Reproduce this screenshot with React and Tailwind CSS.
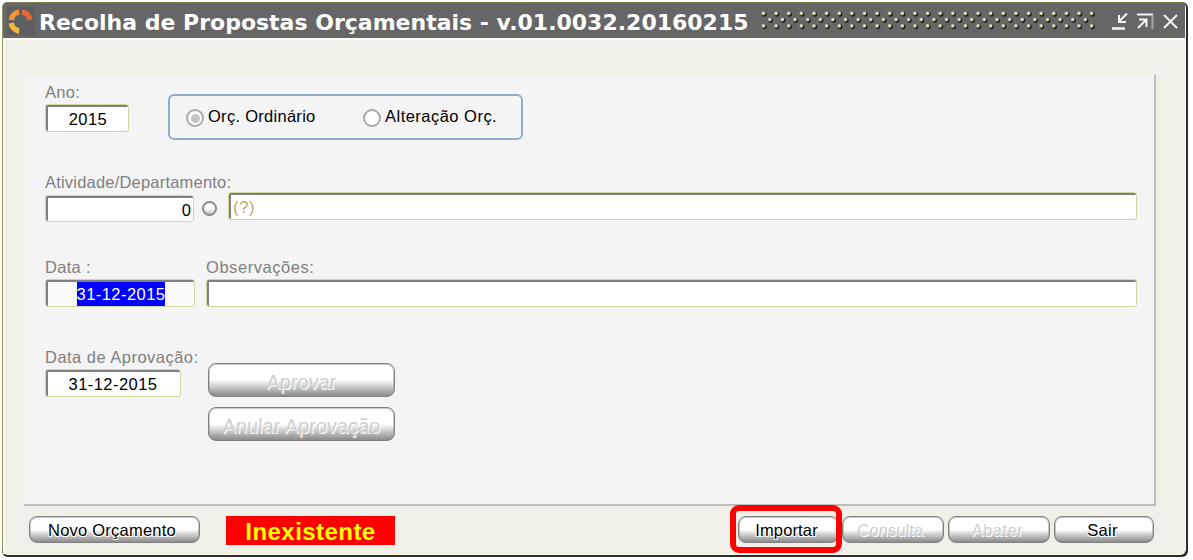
import React from 'react';

function Label({ children, className = '' }) {
  return (
    <div className={`h-[18px] whitespace-nowrap text-[16.5px] leading-[16px] text-[#7f7f7f] ${className}`}>
      {children}
    </div>
  );
}

function Field({ children, className = '' }) {
  return (
    <div className={`shrink-0 rounded-[3px] border border-[#cfd6a0] ${className}`}>
      <div className="flex h-full w-full items-center overflow-hidden rounded-[2px] border-l-2 border-t-2 border-[#808080] whitespace-nowrap">
        {children}
      </div>
    </div>
  );
}

function PushButton({ children, disabled, className = '' }) {
  return (
    <button
      disabled={disabled}
      className={`flex shrink-0 items-center justify-center rounded-[8px] border border-[#808080] bg-linear-to-b from-white from-50% to-[#8a8a8a] shadow-[inset_0_0_0_1px_rgba(150,150,150,0.5)] whitespace-nowrap ${disabled ? 'text-[#cfcfcf] [text-shadow:1px_1px_0_#fff]' : 'text-black [text-shadow:1px_1px_0_#fff,-1px_1px_0_#fff]'} ${className}`}
    >
      {children}
    </button>
  );
}

function Radio({ checked, className = '' }) {
  return (
    <span className={`flex size-[18px] shrink-0 items-center justify-center rounded-full border-2 border-[#a9a9a9] bg-white ${className}`}>
      {checked && <span className="size-[9px] rounded-full bg-[#c6c6c6]" />}
    </span>
  );
}

function Grip() {
  const dots = [];
  for (let i = 0; i < 27; i++) {
    const x = 1.5 + i * 12.62;
    dots.push([x, 2.5], [x, 15]);
    if (i < 26) dots.push([x + 6.3, 8.7]);
  }
  return (
    <svg width="338" height="22" className="block shrink-0">
      {dots.map(([x, y], i) => (
        <g key={i}>
          <circle cx={x + 1.9} cy={y + 1.9} r="2.3" fill="#1a1a1a" />
          <circle cx={x + 1} cy={y + 0.9} r="1.8" fill="#d3d8b0" />
        </g>
      ))}
    </svg>
  );
}

function TitleBar() {
  return (
    <div className="flex h-[35px] shrink-0 items-center rounded-t-[3px] bg-[#666] pl-1">
      <svg width="28" height="28" viewBox="0 0 28 28" className="block shrink-0">
        <rect width="28" height="28" fill="#5e5e60" />
        <g fill="none" strokeWidth="5.4">
          <path d="M4.200 13A9.400 9.400 0 0 1 12.200 5" stroke="#f3943b" />
          <path d="M15 5A9.400 9.400 0 0 1 23 13" stroke="#e76a35" />
          <path d="M4.200 16A9.400 9.400 0 0 0 12.200 24" stroke="#f3b63b" />
        </g>
      </svg>
      <h1 className="mt-[4px] ml-[4px] w-[722px] shrink-0 whitespace-nowrap font-['DejaVu_Sans'] text-[22px] leading-[30px] font-bold text-white">
        Recolha de Propostas Orçamentais - v.01.0032.20160215
      </h1>
      <Grip />
      <svg width="76" height="22" className="ml-[10px] block shrink-0" fill="none" stroke="#f5f5f5" strokeWidth="2">
        <path d="M3 18.500H16" strokeWidth="2.500" />
        <path d="M18 3.500L10.500 11M10 5V12H17" />
        <path d="M28 4.500H44" />
        <path d="M43.500 5V19" stroke="#a5a5a5" />
        <path d="M29 18L37 10M30 9.500H37.500V17" />
        <path d="M55 5L68 18M68 5L55 18" />
      </svg>
    </div>
  );
}

export default function App() {
  return (
    <div className="h-[560px] w-[1193px] overflow-hidden bg-white pt-[2px] pl-[2px] font-['Liberation_Sans',sans-serif] text-[16.5px]">
      <div className="h-[555px] w-[1186px] rounded-[6px] bg-[#2e2e2e] pr-[2px] pb-[2px]">
        <div className="flex h-full w-full flex-col rounded-[6px] border border-r-[#fafae6] border-b-[#fafae6] border-t-[#7f8050] border-l-[#939b61] bg-[#f0efe8]">
          <TitleBar />
          <div className="h-[2px] shrink-0 bg-[#fbfaf3]" />
          <div className="flex flex-1 flex-col border-l-2 border-[#fbfaea] pt-[35px] pl-[19px]">
            <main className="h-[431px] w-[1132px] shrink-0 border-r-2 border-b-2 border-[#bdbdbd] bg-[#f4f4f4] pl-[21px]">
              <section className="flex h-[98px] pt-[9px]">
                <div className="w-[123px]">
                  <Label className="tracking-[0.3px]">Ano:</Label>
                  <Field className="mt-[2px] h-[28px] w-[84px] bg-white">
                    <span className="w-full text-center tracking-[0.45px]">2015</span>
                  </Field>
                </div>
                <div className="mt-[10px] flex h-[46px] w-[355px] rounded-[6px] border-2 border-[#8eabc9] pt-[10px] pl-[16px]">
                  <Radio checked className="mt-[3px]" />
                  <span className="ml-[4px] w-[155px] leading-[20px] tracking-[0.28px]">Orç. Ordinário</span>
                  <Radio className="mt-[3px]" />
                  <span className="ml-[4px] leading-[20px] tracking-[0.48px]">Alteração Orç.</span>
                </div>
              </section>

              <section className="h-[85px]">
                <Label className="mt-[1px] tracking-[0.2px]">Atividade/Departamento:</Label>
                <div className="flex">
                  <Field className="mt-[3px] h-[27px] w-[149px] bg-white">
                    <span className="w-full pt-[2px] pr-[2px] text-right">0</span>
                  </Field>
                  <span className="mt-[9px] ml-[8px] size-[15px] shrink-0 rounded-full border-2 border-[#8b8b8b] bg-linear-to-b from-white from-50% to-[#bbb]" />
                  <Field className="ml-[11px] h-[28px] w-[909px] bg-white">
                    <span className="pt-px pl-[2px] tracking-[0.7px] text-[#b9a968]">(?)</span>
                  </Field>
                </div>
              </section>

              <section className="flex h-[90px]">
                <div className="w-[161px]">
                  <Label className="tracking-[0.3px]">Data :</Label>
                  <Field className="mt-[2px] h-[28px] w-[150px] bg-[#fafafa]">
                    <span className="mx-auto bg-[#0000ff] leading-[24px] tracking-[0.45px] text-white">31-12-2015</span>
                  </Field>
                </div>
                <div>
                  <Label className="tracking-[0.55px]">Observações:</Label>
                  <Field className="mt-[2px] h-[28px] w-[931px] bg-white" />
                </div>
              </section>

              <section className="flex">
                <div className="w-[163px]">
                  <Label className="tracking-[0.48px]">Data de Aprovação:</Label>
                  <Field className="mt-[2px] h-[28px] w-[136px] bg-white">
                    <span className="w-full pr-[2px] text-center tracking-[0.45px]">31-12-2015</span>
                  </Field>
                </div>
                <div className="flex flex-col gap-[10px] pt-[14px]">
                  <PushButton disabled className="h-[34px] w-[187px] pt-[4px] text-[20px]">Aprovar</PushButton>
                  <PushButton disabled className="h-[34px] w-[187px] pt-[4px] text-[20px]">Anular Aprovação</PushButton>
                </div>
              </section>
            </main>

            <footer className="flex pt-[10px] pl-[5px]">
              <PushButton className="h-[27px] w-[171px] pt-[2px] pr-[5px] tracking-[0.23px]">Novo Orçamento</PushButton>
              <div className="ml-[26px] flex h-[29px] w-[169px] shrink-0 items-center justify-center bg-[#ff0000] pt-[3px] text-[24px] leading-[24px] font-bold tracking-[0.45px] text-[#ffff00]">
                Inexistente
              </div>
              <div className="relative ml-[343px] h-[27px]">
                <PushButton className="h-[27px] w-[101px] pt-[2px] pr-[4px] tracking-[0.15px]">Importar</PushButton>
                <span className="absolute -top-[11px] -left-[8px] h-[48px] w-[112px] rounded-[9px] border-[6px] border-[#ff0000]" />
              </div>
              <PushButton disabled className="ml-[3px] h-[27px] w-[102px] pt-[2px] pr-[5px] tracking-[0.15px]">Consulta</PushButton>
              <PushButton disabled className="ml-[4px] h-[27px] w-[102px] pt-[2px] pr-[3px] tracking-[0.5px]">Abater</PushButton>
              <PushButton className="ml-[4px] h-[27px] w-[100px] pt-[2px] pr-[3px] tracking-[0.3px]">Sair</PushButton>
            </footer>
          </div>
        </div>
      </div>
    </div>
  );
}
